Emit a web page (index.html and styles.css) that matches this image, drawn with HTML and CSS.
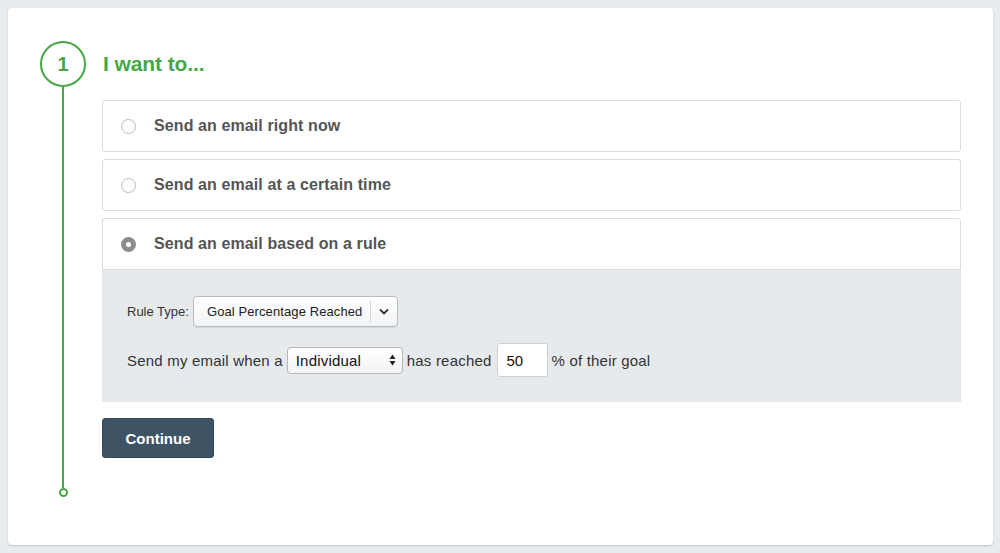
FILE: index.html
```html
<!DOCTYPE html>
<html lang="en">
<head>
    <meta charset="UTF-8">
    <meta name="viewport" content="width=device-width, initial-scale=1.0">
    <title>Send an email</title>
    <link rel="stylesheet" href="styles.css">
</head>
<body>

    <div class="card">
        <div class="step-rail">
            <div class="step-num">1</div>
            <div class="step-line"></div>
            <div class="step-end"></div>
        </div>

        <div class="step-body">
            <h2 class="step-title">I want to...</h2>

            <label class="option">
                <span class="radio"></span>
                <span class="option-text">Send an email right now</span>
            </label>
            <label class="option">
                <span class="radio"></span>
                <span class="option-text">Send an email at a certain time</span>
            </label>
            <label class="option option-open">
                <span class="radio checked"></span>
                <span class="option-text">Send an email based on a rule</span>
            </label>

            <div class="rule-panel">
                <div class="rule-row">
                    <span class="rule-label">Rule Type:</span>
                    <div class="fancy-select">
                        <span class="fancy-value">Goal Percentage Reached</span>
                        <span class="fancy-arrow">
                            <svg width="10" height="7" viewBox="0 0 10 7"><path d="M1 1.5 L5 5.5 L9 1.5" fill="none" stroke="#333" stroke-width="1.8"/></svg>
                        </span>
                    </div>
                </div>
                <div class="rule-row rule-sentence">
                    <span>Send my email when a</span>
                    <div class="mini-select">
                        <span>Individual</span>
                        <svg width="7" height="12" viewBox="0 0 7 12"><path d="M3.5 0.5 L6.5 5 L0.5 5 Z M3.5 11.5 L6.5 7 L0.5 7 Z" fill="#222"/></svg>
                    </div>
                    <span>has reached</span>
                    <input class="pct-input" type="text" value="50">
                    <span>% of their goal</span>
                </div>
            </div>

            <button class="continue-btn" type="button">Continue</button>
        </div>
    </div>

</body>
</html>
```

FILE: styles.css
```css
body {
    font-family: 'Liberation Sans', Arial, sans-serif;
    background-color: #e9ecee;
    color: #333;
    margin: 0;
    padding: 8px 7px 8px 8px;
}

.card {
    display: flex;
    box-sizing: border-box;
    min-height: 537px;
    padding: 33px 32px 48px 32px;
    background-color: #fff;
    border-radius: 4px;
    box-shadow: 0 1px 2px rgba(0, 0, 0, 0.18);
}

.step-rail {
    display: flex;
    flex-direction: column;
    align-items: center;
    width: 46px;
}

.step-num {
    box-sizing: border-box;
    width: 46px;
    height: 46px;
    border: 2px solid #46a845;
    border-radius: 50%;
    color: #46a845;
    font-weight: bold;
    font-size: 20px;
    line-height: 42px;
    text-align: center;
}

.step-line {
    flex: 1;
    width: 2px;
    background-color: #46a845;
}

.step-end {
    box-sizing: border-box;
    width: 9px;
    height: 9px;
    border: 2px solid #46a845;
    border-radius: 50%;
}

.step-body {
    flex: 1;
    margin-left: 16px;
}

.step-title {
    margin: 0 0 13px 1px;
    height: 46px;
    line-height: 46px;
    font-size: 21px;
    font-weight: bold;
    color: #46a845;
    letter-spacing: -0.1px;
}

.option {
    display: flex;
    align-items: center;
    box-sizing: border-box;
    height: 52px;
    padding-left: 18px;
    margin-bottom: 7px;
    border: 1px solid #d8dde0;
    border-radius: 3px;
    background-color: #fff;
}

.option-open {
    margin-bottom: 0;
    border-radius: 3px 3px 0 0;
}

.radio {
    box-sizing: border-box;
    width: 15px;
    height: 15px;
    border: 1px solid #b9b9b9;
    border-radius: 50%;
    background-color: #fff;
}

.radio.checked {
    border: 5px solid #8d8d8f;
    background-color: #fff;
}

.option-text {
    margin-left: 18px;
    font-size: 16px;
    font-weight: bold;
    color: #555;
    letter-spacing: 0.1px;
}

.rule-panel {
    padding: 26px 25px 25px 25px;
    background-color: #e6eaed;
}

.rule-row {
    display: flex;
    align-items: center;
}

.rule-label {
    font-size: 13px;
    color: #333;
    margin-right: 4px;
}

.fancy-select {
    display: flex;
    align-items: center;
    box-sizing: border-box;
    width: 205px;
    height: 31px;
    border: 1px solid #b8bcbf;
    border-radius: 4px;
    background: linear-gradient(#fff, #f2f3f4);
    box-shadow: 0 1px 1px rgba(0, 0, 0, 0.08);
}

.fancy-value {
    flex: 1;
    padding-left: 13px;
    font-size: 13px;
    color: #222;
    letter-spacing: 0.1px;
}

.fancy-arrow {
    display: flex;
    align-items: center;
    justify-content: center;
    width: 26px;
    height: 21px;
    border-left: 1px solid #d5d8da;
}

.rule-sentence {
    margin-top: 16px;
    font-size: 15px;
    color: #333;
    letter-spacing: 0.2px;
}

.mini-select {
    display: flex;
    align-items: center;
    justify-content: space-between;
    box-sizing: border-box;
    width: 116px;
    height: 27px;
    margin: 0 4px 0 4px;
    padding: 0 6px 0 8px;
    border: 1px solid #b5b8bb;
    border-radius: 4px;
    background: linear-gradient(#fff, #f4f4f4);
    font-size: 15px;
    color: #111;
}

.pct-input {
    box-sizing: border-box;
    width: 51px;
    height: 34px;
    margin: 0 4px 0 5px;
    padding: 0 9px;
    border: 1px solid #ccd0d3;
    border-radius: 3px;
    font-family: inherit;
    font-size: 15px;
    color: #111;
}

.continue-btn {
    display: block;
    width: 112px;
    height: 40px;
    margin-top: 16px;
    background-color: #3e5464;
    border: 1px solid #34495a;
    border-radius: 3px;
    color: #fff;
    font-family: inherit;
    font-size: 15px;
    font-weight: bold;
}
```
